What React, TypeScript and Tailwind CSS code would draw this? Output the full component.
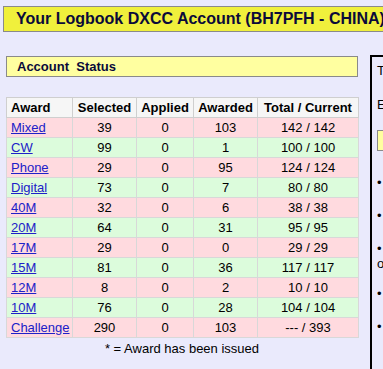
import React from "react";

const rows = [
  { award: "Mixed", selected: "39", applied: "0", awarded: "103", total: "142 / 142" },
  { award: "CW", selected: "99", applied: "0", awarded: "1", total: "100 / 100" },
  { award: "Phone", selected: "29", applied: "0", awarded: "95", total: "124 / 124" },
  { award: "Digital", selected: "73", applied: "0", awarded: "7", total: "80 / 80" },
  { award: "40M", selected: "32", applied: "0", awarded: "6", total: "38 / 38" },
  { award: "20M", selected: "64", applied: "0", awarded: "31", total: "95 / 95" },
  { award: "17M", selected: "29", applied: "0", awarded: "0", total: "29 / 29" },
  { award: "15M", selected: "81", applied: "0", awarded: "36", total: "117 / 117" },
  { award: "12M", selected: "8", applied: "0", awarded: "2", total: "10 / 10" },
  { award: "10M", selected: "76", applied: "0", awarded: "28", total: "104 / 104" },
  { award: "Challenge", selected: "290", applied: "0", awarded: "103", total: "--- / 393" },
];

export default function App() {
  return (
    <div
      className="w-[383px] h-[369px] overflow-hidden bg-[#eaeafc] text-[13px] text-black"
      style={{ fontFamily: '"Liberation Sans", Arial, sans-serif' }}
    >
      {/* page title */}
      <div className="ml-[3px] mt-[6px] w-[420px] h-[26px] bg-[#f0f03c] border border-[#8a8a8a] flex items-center pl-[12px]">
        <span className="text-[16px] font-bold text-[#0a0a3a] whitespace-nowrap">
          Your Logbook DXCC Account (BH7PFH - CHINA)
        </span>
      </div>

      <div className="flex mt-[23px]">
        {/* left column */}
        <div className="ml-[6px] w-[352px] shrink-0">
          <div className="mt-[1px] h-[21px] bg-[#ffffa0] border border-[#8a8a8a] flex items-center pl-[10px]">
            <span className="font-bold text-[13px] text-[#0a0a3a]">Account&nbsp; Status</span>
          </div>

          <table className="mt-[20px] w-[352px] border-collapse border border-[#a8a8a8] table-fixed">
            <colgroup>
              <col className="w-[66px]" />
              <col className="w-[64px]" />
              <col className="w-[57px]" />
              <col className="w-[64px]" />
              <col className="w-[101px]" />
            </colgroup>
            <thead>
              <tr className="bg-[#f6f6f6] font-bold">
                <th className="h-[20px] p-0 leading-[18px] border border-[#cfcfcf] text-left pl-[4px] font-bold">Award</th>
                <th className="h-[20px] p-0 leading-[18px] border border-[#cfcfcf] font-bold">Selected</th>
                <th className="h-[20px] p-0 leading-[18px] border border-[#cfcfcf] font-bold">Applied</th>
                <th className="h-[20px] p-0 leading-[18px] border border-[#cfcfcf] font-bold">Awarded</th>
                <th className="h-[20px] p-0 leading-[18px] border border-[#cfcfcf] font-bold">Total / Current</th>
              </tr>
            </thead>
            <tbody>
              {rows.map((r, i) => (
                <tr key={r.award} className={i % 2 === 0 ? "bg-[#ffdadf]" : "bg-[#dcfcdc]"}>
                  <td className="h-[20px] p-0 leading-[18px] border border-[#d8d8d8] pl-[4px]">
                    <a href="#" className="text-[#2020c8] underline">
                      {r.award}
                    </a>
                  </td>
                  <td className="h-[20px] p-0 leading-[18px] border border-[#d8d8d8] text-center">{r.selected}</td>
                  <td className="h-[20px] p-0 leading-[18px] border border-[#d8d8d8] text-center">{r.applied}</td>
                  <td className="h-[20px] p-0 leading-[18px] border border-[#d8d8d8] text-center">{r.awarded}</td>
                  <td className="h-[20px] p-0 leading-[18px] border border-[#d8d8d8] text-center">{r.total}</td>
                </tr>
              ))}
            </tbody>
          </table>
          <div className="text-center mt-[1px]">* = Award has been issued</div>
        </div>

        {/* right panel, mostly cut off */}
        <div className="ml-[12px] w-[240px] shrink-0 h-[330px] border-2 border-black bg-[#eaeafc] pl-[5px] pt-[6px] whitespace-nowrap">
          <div className="leading-[15px]">To apply for an award</div>
          <div className="mt-[19px] leading-[15px]">Each award</div>
          <div className="mt-[18px] h-[21px] w-[200px] bg-[#ffffa0] border border-[#8a8a8a]" />
          <div className="mt-[24px] leading-[15px]">• Select QSOs</div>
          <div className="mt-[18px] leading-[15px]">• Review</div>
          <div className="mt-[18px] leading-[15px]">• Apply</div>
          <div className="leading-[15px]">or</div>
          <div className="mt-[15px] leading-[15px]">• Pay</div>
          <div className="mt-[18px] leading-[15px]">• Done</div>
        </div>
      </div>
    </div>
  );
}
